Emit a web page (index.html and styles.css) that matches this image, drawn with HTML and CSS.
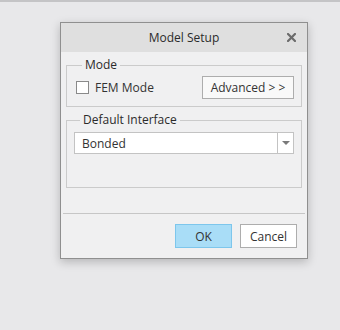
FILE: index.html
```html
<!DOCTYPE html>
<html lang="en">
<head>
    <meta charset="UTF-8">
    <title>Model Setup</title>
    <link rel="stylesheet" href="styles.css">
</head>
<body>

<div class="desk">
    <!--The dialog window-->
    <div class="dialog">
        <div class="titleBar">
            <span></span>
            <span class="title">Model Setup</span>
            <svg class="close" width="9" height="9" viewBox="0 0 9 9">
                <path d="M1 1 L8 8 M8 1 L1 8" stroke="#6b6b6b" stroke-width="2.2" stroke-linecap="square"/>
            </svg>
        </div>

        <div class="dialogBody">
            <fieldset class="group">
                <legend>Mode</legend>
                <div class="modeRow">
                    <label class="check"><span class="box"></span> FEM Mode</label>
                    <button class="btn">Advanced &gt; &gt;</button>
                </div>
            </fieldset>

            <fieldset class="group groupTall">
                <legend>Default Interface</legend>
                <div class="select">
                    <span class="selectText">Bonded</span>
                    <span class="selectArrow"><span class="tri"></span></span>
                </div>
            </fieldset>
        </div>

        <div class="separator"></div>

        <div class="buttons">
            <button class="btn btnOk">OK</button>
            <button class="btn btnCancel">Cancel</button>
        </div>
    </div>
</div>

</body>
</html>
```

FILE: styles.css
```css
/*CSS for whole page*/
body {
    margin: 0;
    background-color: #e8e8ea;
    font-family: "Open Sans", "Noto Sans", sans-serif;
    font-size: 12px;
    color: #333333;
}

.desk {
    border-top: 2px solid #c4c4c6;
    height: 328px;
    padding: 20px 0 0 60px;
    box-sizing: border-box;
}

/*CSS for the dialog window*/
.dialog {
    width: 248px;
    height: 237px;
    box-sizing: border-box;
    border: 1px solid #8f8f8f;
    background-color: #f0f0f1;
    box-shadow: 0 3px 9px rgba(0, 0, 0, 0.22);
    display: flex;
    flex-direction: column;
}

.titleBar {
    height: 29px;
    background-color: #dfdfdf;
    display: grid;
    grid-template-columns: 1fr auto 1fr;
    align-items: center;
}

.title {
    font-size: 12px;
    color: #2b2b2b;
}

.close {
    justify-self: end;
    margin-right: 11px;
}

.dialogBody {
    padding: 5px 5px 0 5px;
}

/*CSS for the group boxes*/
.group {
    margin: 0;
    border: 1px solid #cbcbcb;
    padding: 3px 7px 7px 9px;
}

.group legend {
    padding: 0 3px;
    margin-left: 6px;
    font-size: 12px;
    line-height: 16px;
    color: #2b2b2b;
}

.groupTall {
    margin-top: 5px;
    padding: 4px 7px 33px 7px;
}

.modeRow {
    display: flex;
    justify-content: space-between;
    align-items: center;
}

.check {
    display: flex;
    align-items: center;
    gap: 6px;
}

.box {
    width: 11px;
    height: 11px;
    border: 1px solid #8a8a8a;
    background-color: #ffffff;
}

.btn {
    font-family: "Open Sans", "Noto Sans", sans-serif;
    font-size: 12px;
    color: #333333;
    height: 23px;
    padding: 0;
    border: 1px solid #adadad;
    background-color: #f9f9f9;
}

.modeRow .btn {
    width: 92px;
}

/*CSS for the drop down*/
.select {
    height: 22px;
    box-sizing: border-box;
    border: 1px solid #c3c3c3;
    background-color: #ffffff;
    display: flex;
    align-items: center;
}

.selectText {
    flex: 1;
    padding-left: 7px;
}

.selectArrow {
    width: 15px;
    height: 100%;
    border-left: 1px solid #c3c3c3;
    display: flex;
    align-items: center;
    justify-content: center;
}

.tri {
    width: 0;
    height: 0;
    border-left: 4px solid transparent;
    border-right: 4px solid transparent;
    border-top: 4px solid #7a7a7a;
}

.separator {
    margin: 25px 2px 0 2px;
    border-top: 1px solid #c6c6c6;
}

.buttons {
    display: flex;
    justify-content: flex-end;
    gap: 8px;
    padding: 10px 10px 0 0;
}

.buttons .btn {
    height: 24px;
}

.btnOk {
    width: 57px;
    background-color: #a9ddf7;
    border-color: #7dc6ec;
}

.btnCancel {
    width: 57px;
    background-color: #ffffff;
}
```
